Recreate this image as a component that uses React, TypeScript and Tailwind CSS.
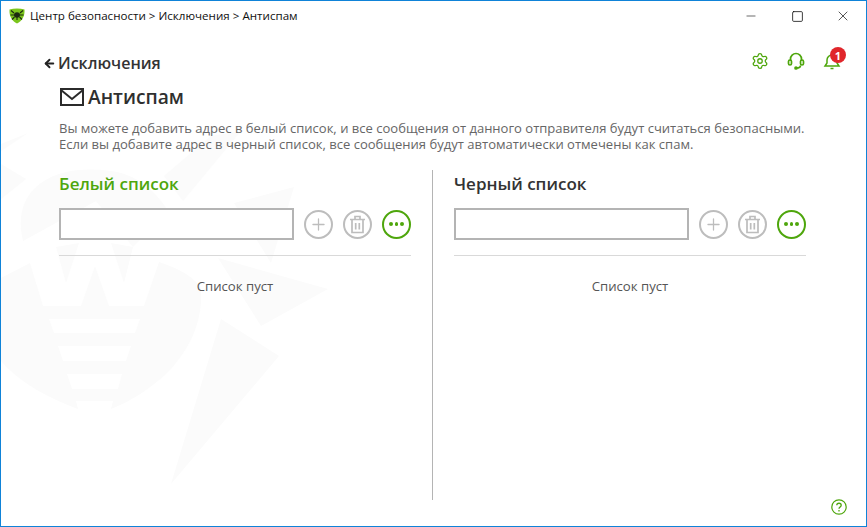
import { ArrowLeft, Minus, Plus, Settings, Square, X } from 'lucide-react';

const FONT = "font-['Open_Sans','Noto_Sans',sans-serif]";

const Watermark = () => (
  <svg
    className="absolute left-0 top-0 h-[527px] w-[867px]"
    viewBox="0 0 867 527"
    fill="#fbfbfb"
  >
    <path d="M29 262 42 305H80L94 265 108 305H143L158 261 C180 268 192 276 200 287 C202 320 190 345 170 368 C150 388 130 400 110 408L112 400H75L77 408C50 398 20 383 0 360V277Z" />
    <path d="M22 240C16 215 22 195 40 182C60 168 85 167 110 170C135 173 155 190 167 210L132 246 95 200Z" />
    <path d="M55 246 78 242 65 282ZM110 242 132 246 123 282Z" />
    <path d="M27 132 0 143V163L25 178 0 198V150Z" />
    <path d="M163 175 210 135 240 130 182 200Z" />
    <path d="M233 202 293 186 270 262Z" />
    <path d="M217 257 327 288 260 325Z" />
    <path d="M220 318 278 355 170 483Z" />
    <path fill="#ffffff" d="M48 318H139L134 332H53ZM57 345H130L125 360H62ZM66 373H121L117 388H71Z" />
  </svg>
);

const RoundButton = ({ active, children }: { active?: boolean; children: React.ReactNode }) => (
  <div
    className={`flex h-[29px] w-[29px] items-center justify-center rounded-full border-2 ${
      active ? 'border-[#4ea60c]' : 'border-[#bdbdbd]'
    }`}
  >
    {children}
  </div>
);

const ListColumn = ({ title, titleClass }: { title: string; titleClass: string }) => (
  <div className="flex w-[352px] flex-col">
    <h2 className={`mt-[1px] h-[26px] text-[17px] leading-[26px] font-semibold ${titleClass}`}>{title}</h2>
    <div className="mt-[11px] flex items-center">
      <input className="h-[32px] w-[235px] border-2 border-[#b4b4b4] bg-white" />
      <div className="ml-[10px] flex gap-[10px]">
        <RoundButton>
          <Plus size={19} strokeWidth={1.6} className="text-[#bdbdbd]" />
        </RoundButton>
        <RoundButton>
          <svg className="h-[19px] w-[17px]" viewBox="0 0 17 19" fill="none" stroke="#bdbdbd" strokeWidth="1.7">
            <path d="M1 4.500H16M6 4V1.500H11V4M3 4.500V17.500H14V4.500M6.700 8V14.500M10.300 8V14.500" />
          </svg>
        </RoundButton>
        <RoundButton active>
          <div className="flex gap-[2px]">
            <span className="h-[3.5px] w-[3.5px] rounded-full bg-[#4ea60c]" />
            <span className="h-[3.5px] w-[3.5px] rounded-full bg-[#4ea60c]" />
            <span className="h-[3.5px] w-[3.5px] rounded-full bg-[#4ea60c]" />
          </div>
        </RoundButton>
      </div>
    </div>
    <div className="mt-[15px] border-t border-[#d9d9d9]" />
    <p className="mt-[21px] text-center text-[13.2px] leading-[18px] text-[#555555]">Список пуст</p>
  </div>
);

export default function App() {
  return (
    <div className={`relative flex h-[527px] w-[867px] flex-col overflow-hidden border border-[#0f83d8] bg-white ${FONT}`}>
      <Watermark />

      <header className="relative flex h-[30px] items-center">
        <svg className="ml-[8px] h-[16px] w-[16px]" viewBox="0 0 16 16">
          <path d="M.5 1.500C5 .3 11 .3 15.500 1.500 16 8 13 13 8 15.500 3 13 0 8 .5 1.500Z" fill="#7ac51c" />
          <ellipse cx="8" cy="7" rx="3" ry="2.800" fill="#1c2a10" />
          <path d="M2 2.500 5 5M14 2.500 11 5M1.500 7H5M14.500 7H11M3 11.500 5.500 9M13 11.500 10.500 9M8 9V12" stroke="#1c2a10" strokeWidth="1.1" />
        </svg>
        <span className="ml-[5px] text-[11.6px] leading-[16px] text-[#111111]">
          Центр безопасности &gt; Исключения &gt; Антиспам
        </span>
        <div className="ml-auto flex items-center">
          <div className="flex h-[30px] w-[46px] items-center justify-center">
            <Minus size={14} strokeWidth={1} className="text-black" />
          </div>
          <div className="flex h-[30px] w-[46px] items-center justify-center">
            <Square size={13} strokeWidth={1.4} className="text-black" />
          </div>
          <div className="flex h-[30px] w-[46px] items-center justify-center">
            <X size={16} strokeWidth={1} className="text-black" />
          </div>
        </div>
      </header>

      <main className="relative flex flex-1 flex-col pl-[58px]">
        <div className="mt-[19px] flex h-[26px] items-center">
          <ArrowLeft size={13} strokeWidth={3.5} className="-ml-[16px] text-[#222222]" />
          <span className="ml-[2px] text-[16px] leading-[26px] font-semibold text-[#333333]">Исключения</span>
          <div className="absolute right-[25px] top-[21px] flex items-center gap-[18px] text-[#4ea60c]">
            <Settings size={18} strokeWidth={1.7} />
            <svg className="h-[18px] w-[18px]" viewBox="0 0 18 18" fill="none" stroke="currentColor" strokeWidth="1.7">
              <path d="M3.500 9V7A5.500 5.500 0 0 1 14.500 7V9M13.500 13.500C13.500 15.500 12 16 9.500 16" />
              <rect x="1.500" y="8" width="3" height="5" rx="1.500" />
              <rect x="13.500" y="8" width="3" height="5" rx="1.500" />
              <circle cx="9" cy="16" r="1" fill="currentColor" />
            </svg>
            <div className="relative h-[18px] w-[18px]">
              <svg className="h-[18px] w-[18px]" viewBox="0 0 18 18" fill="none" stroke="currentColor" strokeWidth="1.5">
                <path d="M2 14H16L14 11V8A5 5 0 0 0 4 8V11ZM7.500 16.500H10.500" />
              </svg>
              <span className="absolute -right-[5px] -top-[5px] flex h-[16px] w-[16px] items-center justify-center rounded-full bg-[#e0262b] text-[11px] leading-none font-bold text-white">
                1
              </span>
            </div>
          </div>
        </div>

        <div className="mt-[4px] flex h-[34px] items-center">
          <svg className="ml-[1px] h-[18px] w-[24px]" viewBox="0 0 24 18" fill="none" stroke="#2b2b2b" strokeWidth="2">
            <path d="M1 1H23V17H1ZM1 2 12 11 23 2" />
          </svg>
          <h1 className="ml-[4px] text-[19.2px] leading-[34px] font-semibold text-[#2f2f2f]">Антиспам</h1>
        </div>

        <p className="mt-[6px] text-[13.04px] leading-[16px] whitespace-nowrap text-[#666666]">
          Вы можете добавить адрес в белый список, и все сообщения от данного отправителя будут считаться безопасными.
          <br />
          Если вы добавите адрес в черный список, все сообщения будут автоматически отмечены как спам.
        </p>

        <div className="mt-[18px] flex h-[330px]">
          <ListColumn title="Белый список" titleClass="text-[#4ea60c]" />
          <div className="ml-[21px] w-px bg-[#b4b4b4]" />
          <div className="ml-[21px]">
            <ListColumn title="Черный список" titleClass="text-[#333333]" />
          </div>
        </div>

        <svg className="absolute bottom-[11px] right-[19px] h-[16px] w-[16px]" viewBox="0 0 16 16" fill="none" stroke="#4ea60c">
          <circle cx="8" cy="8" r="7.200" strokeWidth="1.2" />
          <path d="M5.800 6.200C5.800 3.600 10.200 3.600 10.200 6.200 10.200 8 8 8 8 9.800M8 11V12.500" strokeWidth="1.3" />
        </svg>
      </main>
    </div>
  );
}
